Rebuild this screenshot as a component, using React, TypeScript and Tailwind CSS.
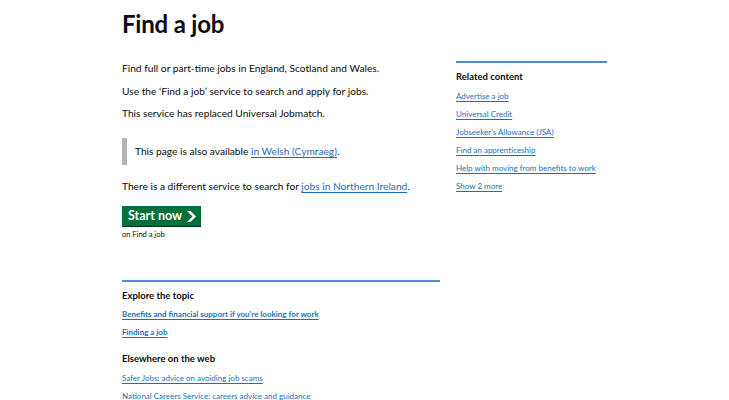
import React from "react";

const Chevron = () => (
  <svg width="9" height="11" viewBox="0 0 33 40" aria-hidden="true" className="ml-[5px]">
    <path fill="currentColor" d="M0 0h13l20 20-20 20H0l20-20z" />
  </svg>
);

const linkCls = "text-[#1d70b8] underline underline-offset-[1.5px] decoration-[0.5px]";

export default function App() {
  const related = [
    "Advertise a job",
    "Universal Credit",
    "Jobseeker's Allowance (JSA)",
    "Find an apprenticeship",
    "Help with moving from benefits to work",
    "Show 2 more",
  ];
  return (
    <div className="min-h-[400px] bg-white text-[#0b0c0c]" style={{ fontFamily: "Lato, 'Liberation Sans', sans-serif" }}>
      <div className="mx-auto w-[485px] pt-[12px]">
        <h1 className="text-[24px] leading-[24px] font-bold tracking-[-0.2px]">Find a job</h1>
        <div className="mt-[25px] flex gap-[16px]">
          <div className="w-[318px] shrink-0">
            <p className="text-[10.2px] leading-[15px] mb-[7.5px]">Find full or part-time jobs in England, Scotland and Wales.</p>
            <p className="text-[10.2px] leading-[15px] mb-[7.5px]">Use the ‘Find a job’ service to search and apply for jobs.</p>
            <p className="text-[10.2px] leading-[15px]">This service has replaced Universal Jobmatch.</p>
            <div className="mt-[17px] border-l-[5px] border-[#b1b4b6] pl-[8px] py-[6px]">
              <p className="text-[10.2px] leading-[15px]">
                This page is also available <a className={linkCls}>in Welsh (Cymraeg)</a>.
              </p>
            </div>
            <p className="mt-[14px] text-[10.2px] leading-[15px]">
              There is a different service to search for <a className={linkCls}>jobs in Northern Ireland</a>.
            </p>
            <div className="mt-[12px] flex">
              <a className="flex h-[20px] items-center bg-[#00703c] pl-[6px] pr-[5px] text-white text-[12.5px] font-bold shadow-[0_1px_0_#002d18]">
                Start now
                <Chevron />
              </a>
            </div>
            <p className="mt-[3px] text-[7.5px] leading-[11px]">on Find a job</p>
            <div className="mt-[40px] border-t-2 border-[#4f8fcf] pt-[7px]">
              <h2 className="text-[9.5px] leading-[14px] font-bold">Explore the topic</h2>
              <ul className="mt-[5px] flex flex-col gap-[6px]">
                <li className="text-[8px] leading-[12px] font-bold">
                  <a className={linkCls}>Benefits and financial support if you're looking for work</a>
                </li>
                <li className="text-[8px] leading-[12px] font-bold">
                  <a className={linkCls}>Finding a job</a>
                </li>
              </ul>
              <h2 className="mt-[14px] text-[9.5px] leading-[14px] font-bold">Elsewhere on the web</h2>
              <ul className="mt-[6px] flex flex-col gap-[6px]">
                <li className="text-[8px] leading-[12px]">
                  <a className={linkCls}>Safer Jobs: advice on avoiding job scams</a>
                </li>
                <li className="text-[8px] leading-[12px]">
                  <a className={linkCls}>National Careers Service: careers advice and guidance</a>
                </li>
              </ul>
            </div>
          </div>
          <aside className="w-[151px] shrink-0 mt-[0px] border-t-2 border-[#4f8fcf] pt-[7px]">
            <h2 className="text-[9.5px] leading-[14px] font-bold">Related content</h2>
            <ul className="mt-[5.5px] flex flex-col gap-[6.2px]">
              {related.map((r) => (
                <li key={r} className="text-[8px] leading-[12px]">
                  <a className={linkCls}>{r}</a>
                </li>
              ))}
            </ul>
          </aside>
        </div>
      </div>
    </div>
  );
}
